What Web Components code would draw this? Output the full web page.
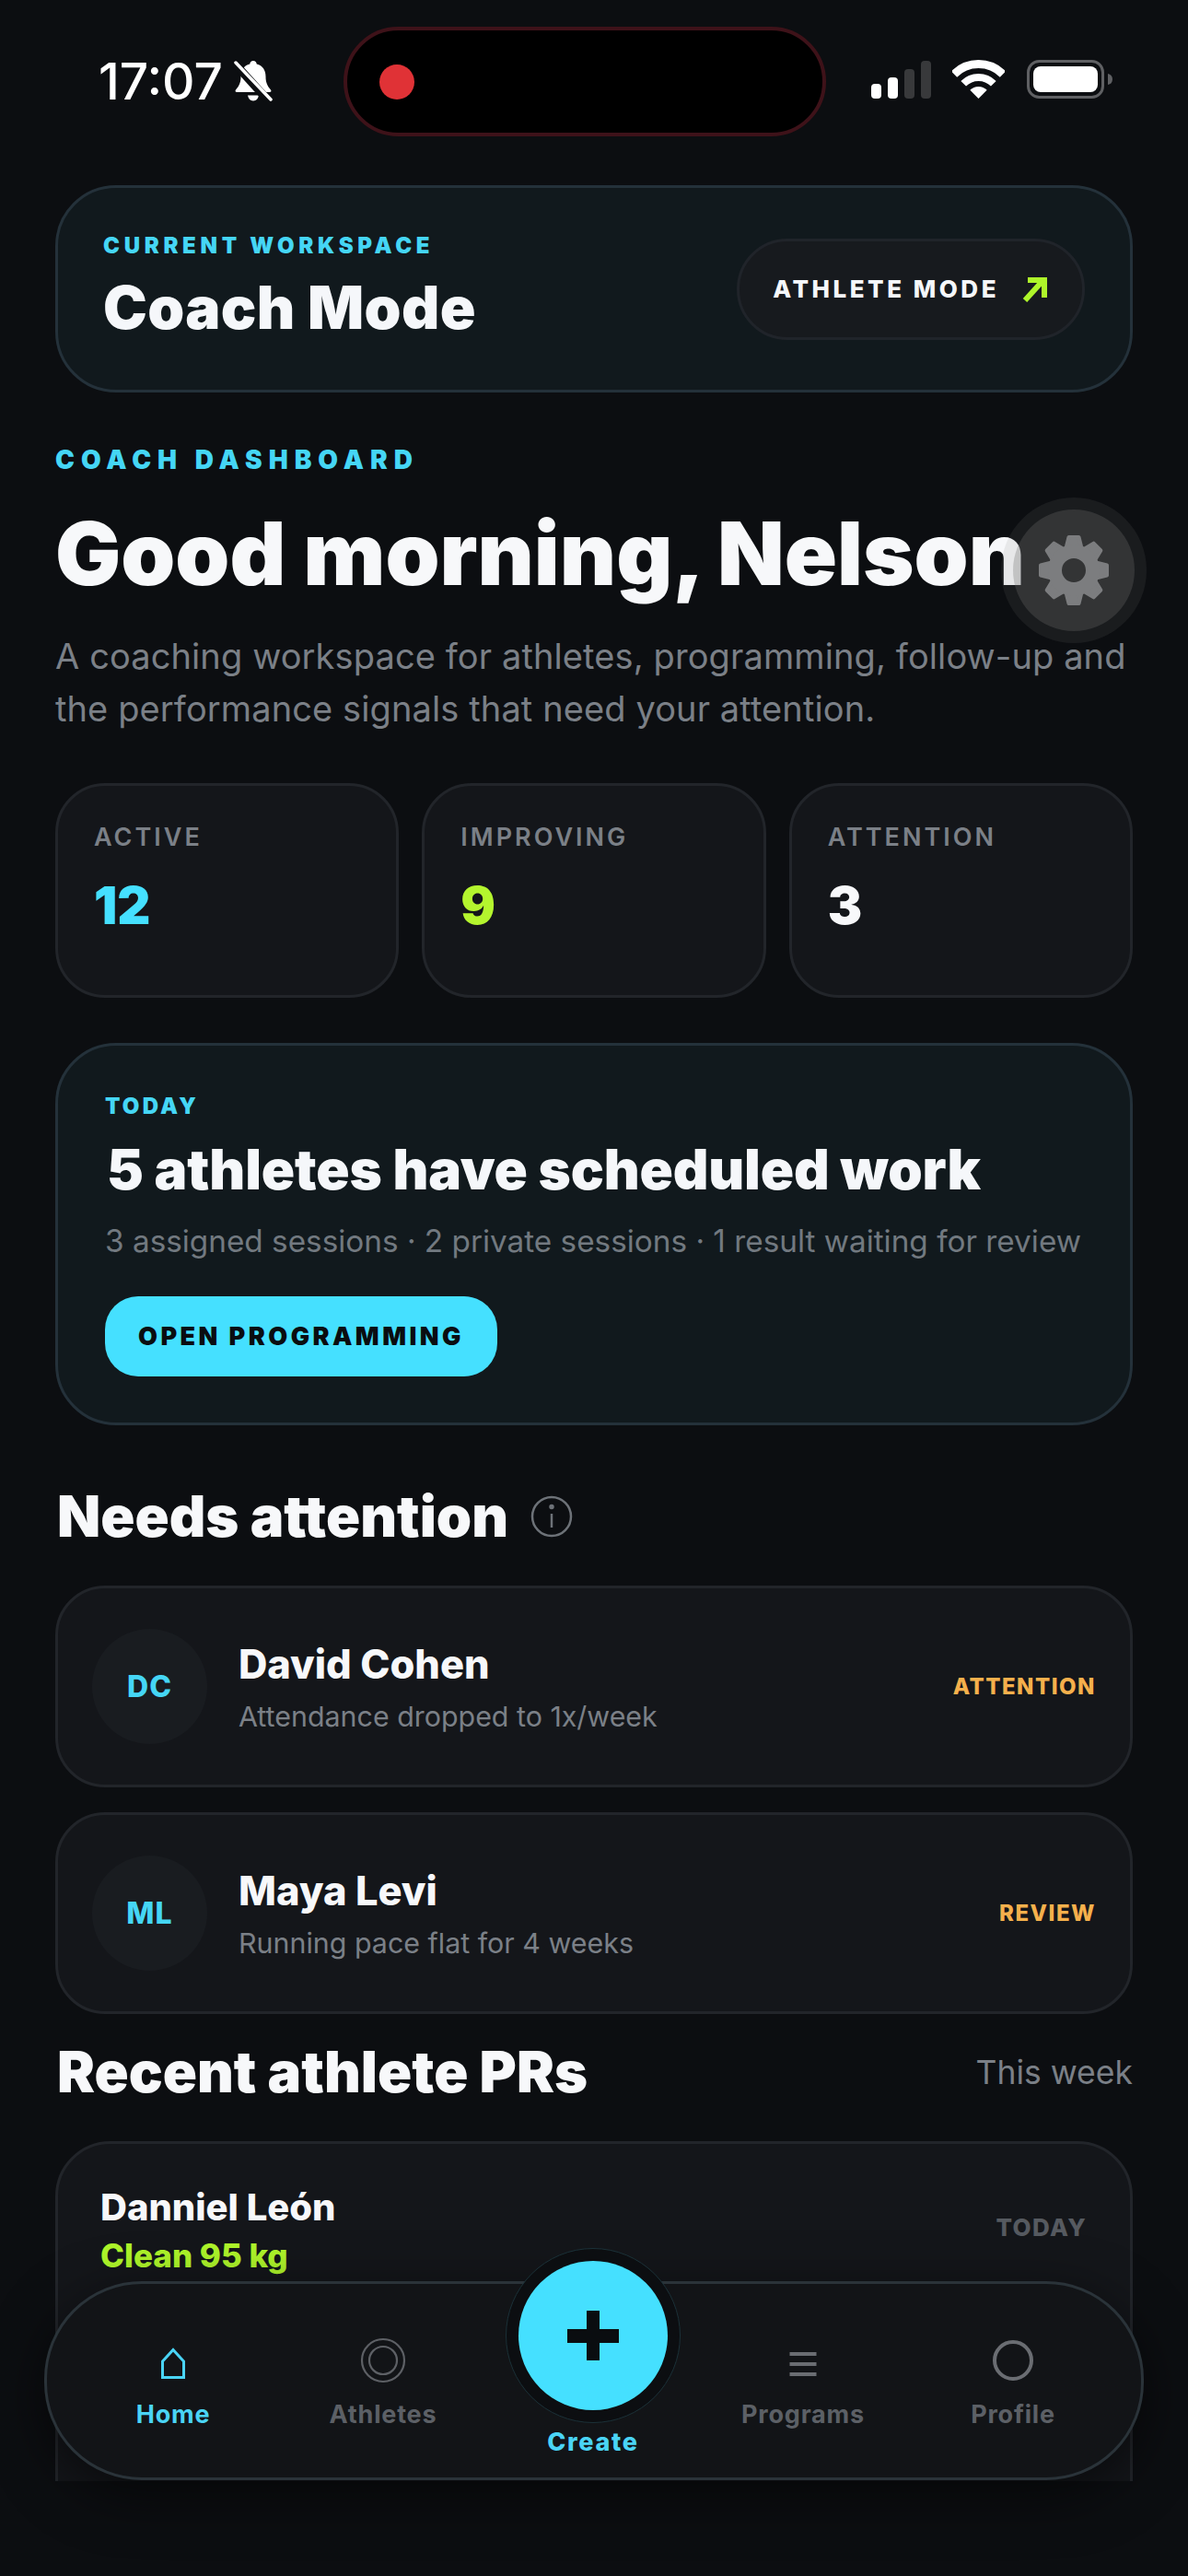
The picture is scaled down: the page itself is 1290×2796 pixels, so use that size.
<!DOCTYPE html>
<html lang="en">
<head>
<meta charset="utf-8">
<title>Coach dashboard</title>
<style>
  html, body { margin: 0; padding: 0; background: #0c0e11; }
  body { font-family: Inter, "Noto Sans", sans-serif; color: #f5f7fa; }
</style>
</head>
<body>

<app-shell>
  <status-bar></status-bar>
  <workspace-card label="CURRENT WORKSPACE" title="Coach Mode" action="ATHLETE MODE"></workspace-card>
  <hero-block label="COACH DASHBOARD" title="Good morning, Nelson">
    A coaching workspace for athletes, programming, follow-up and the performance signals that need your attention.
  </hero-block>
  <stat-row>
    <stat-card label="ACTIVE" value="12" tone="cyan"></stat-card>
    <stat-card label="IMPROVING" value="9" tone="lime"></stat-card>
    <stat-card label="ATTENTION" value="3"></stat-card>
  </stat-row>
  <today-card label="TODAY" title="5 athletes have scheduled work" action="OPEN PROGRAMMING">
    3 assigned sessions · 2 private sessions · 1 result waiting for review
  </today-card>
  <section-head title="Needs attention" info style="--top: 63px"></section-head>
  <athlete-row initials="DC" name="David Cohen" note="Attendance dropped to 1x/week" badge="ATTENTION"></athlete-row>
  <athlete-row initials="ML" name="Maya Levi" note="Running pace flat for 4 weeks" badge="REVIEW"></athlete-row>
  <section-head title="Recent athlete PRs" aside="This week" style="--top: 27px"></section-head>
  <pr-card name="Danniel León" lift="Clean 95 kg" when="TODAY"></pr-card>

  <settings-fab slot="overlay"></settings-fab>
  <tab-bar slot="overlay"></tab-bar>
</app-shell>

<script>
class AppShell extends HTMLElement {
    constructor() {
        super();
        this.attachShadow({ mode: "open" }).innerHTML = `
            <style>
                :host { display: block; position: relative; width: 1290px; height: 2796px; overflow: hidden; }
                .scroll { height: 2693px; padding: 0 60px; box-sizing: border-box; overflow: hidden; }
            </style>
            <div class="scroll"><slot></slot></div>
            <slot name="overlay"></slot>
        `;
    }
}

class StatusBar extends HTMLElement {
    constructor() {
        super();
        this.attachShadow({ mode: "open" }).innerHTML = `
            <style>
                :host { display: flex; align-items: flex-start; height: 201px; margin: 0 -60px; }
                .time { margin: 60px 0 0 107px; width: 137px; font-size: 55px; line-height: 56px; font-weight: 500; letter-spacing: 0; color: #fff; white-space: nowrap; }
                .bell { margin: 65px 0 0 8px; }
                .island { margin: 29px 0 0 77px; width: 524px; height: 119px; box-sizing: border-box; border: 4px solid #3e1219; border-radius: 60px; background: #000; display: flex; align-items: center; padding-left: 35px; }
                .dot { width: 38px; height: 38px; border-radius: 50%; background: #e03236; }
                .signal { margin: 65px 0 0 49px; display: flex; align-items: flex-end; gap: 7px; height: 42px; }
                .signal i { display: block; width: 11px; border-radius: 4px; background: #38393b; }
                .signal i.on { background: #fff; }
                .wifi { margin: 65px 0 0 23px; }
                .battery { margin: 65px 0 0 24px; }
            </style>
            <div class="time">17:07</div>
            <svg class="bell" width="44" height="46" viewBox="0 0 44 46">
                <path fill="#fff" d="M23 1c2.200 0 3.500 1.500 3.700 3.500 6.500 1.500 9.800 6.800 9.800 13.500 0 6 1.500 10 5.500 14.500 1 1.200.3 2.500-1.200 2.500H5.200c-1.500 0-2.200-1.300-1.200-2.500 4-4.500 5.500-8.500 5.500-14.500 0-6.700 3.300-12 9.800-13.500C19.500 2.500 20.800 1 23 1zM17 38.500h12c-.8 3.800-2.800 6-6 6s-5.200-2.200-6-6z"/>
                <path d="M2 3 L40 45" stroke="#0c0e11" stroke-width="9" fill="none"/>
                <path d="M4 3 L42 43" stroke="#fff" stroke-width="3.500" fill="none" stroke-linecap="round"/>
            </svg>
            <div class="island"><div class="dot"></div></div>
            <div class="signal">
                <i class="on" style="height:16px"></i><i class="on" style="height:23px"></i><i style="height:32px"></i><i style="height:41px"></i>
            </div>
            <svg class="wifi" width="57" height="42" viewBox="0 0 57 42" fill="none" stroke="#fff">
                <path stroke-width="9" d="M2 15.500A37.500 37.500 0 0 1 55 15.500"/>
                <path stroke-width="8" d="M12.200 25.700A23 23 0 0 1 44.800 25.700"/>
                <path stroke="none" fill="#fff" d="M28.500 42L19.300 32.800A13 13 0 0 1 37.700 32.800Z"/>
            </svg>
            <svg class="battery" width="94" height="42" viewBox="0 0 94 42">
                <rect x="1.500" y="1.500" width="81" height="39" rx="12" fill="none" stroke="#5f6063" stroke-width="3"/>
                <rect x="7" y="7" width="70" height="28" rx="8" fill="#fff"/>
                <path d="M88 15c3 .5 5 2.500 5 6s-2 5.500-5 6z" fill="#5f6063"/>
            </svg>
        `;
    }
}

class WorkspaceCard extends HTMLElement {
    constructor() {
        super();
        this.attachShadow({ mode: "open" }).innerHTML = `
            <style>
                :host { display: flex; align-items: center; justify-content: space-between; height: 225px; box-sizing: border-box; padding: 0 49px; background: #11191d; border: 3px solid #24313a; border-radius: 66px; }
                .text { padding-bottom: 5px; }
                .label { font-size: 24px; line-height: 30px; font-weight: 900; letter-spacing: 4.700px; color: #45d6f5; }
                .title { margin-top: 16px; font-size: 64px; line-height: 72px; font-weight: 900; letter-spacing: .4px; color: #f5f7fa; }
                .action { display: flex; align-items: center; gap: 24px; height: 110px; box-sizing: border-box; padding: 0 36px; background: #171a1e; border: 3px solid #20242a; border-radius: 55px; font-size: 26px; font-weight: 800; letter-spacing: 3.500px; color: #f5f7fa; }
            </style>
            <div class="text">
                <div class="label">${this.getAttribute("label")}</div>
                <div class="title">${this.getAttribute("title")}</div>
            </div>
            <div class="action">${this.getAttribute("action")}
                <svg width="30" height="28" viewBox="0 0 30 28" fill="none" stroke="#aef52a" stroke-width="6">
                    <path d="M4 26L23 5"/><path d="M7 4H25V23"/>
                </svg>
            </div>
        `;
        this.removeAttribute("title");
    }
}

class HeroBlock extends HTMLElement {
    constructor() {
        super();
        this.attachShadow({ mode: "open" }).innerHTML = `
            <style>
                :host { display: block; margin-top: 56px; }
                .label { font-size: 28px; line-height: 34px; font-weight: 900; letter-spacing: 7px; color: #45d6f5; }
                h1 { margin: 30px 0 0; font-size: 94.500px; line-height: 110px; font-weight: 900; letter-spacing: 0; color: #f7f8fa; white-space: nowrap; }
                p { margin: 28px 0 0; font-size: 38px; line-height: 57px; font-weight: 400; letter-spacing: .11px; color: #7b8087; }
            </style>
            <div class="label">${this.getAttribute("label")}</div>
            <h1>${this.getAttribute("title")}</h1>
            <p><slot></slot></p>
        `;
        this.removeAttribute("title");
    }
}

class StatRow extends HTMLElement {
    constructor() {
        super();
        this.attachShadow({ mode: "open" }).innerHTML = `
            <style>
                :host { display: grid; grid-template-columns: repeat(3, 1fr); gap: 25px; margin-top: 52px; }
            </style>
            <slot></slot>
        `;
    }
}

class StatCard extends HTMLElement {
    constructor() {
        super();
        const tones = { cyan: "#45e0ff", lime: "#b4f52e" };
        const color = tones[this.getAttribute("tone")] || "#f7f8fa";
        this.attachShadow({ mode: "open" }).innerHTML = `
            <style>
                :host { display: block; height: 233px; box-sizing: border-box; padding: 39px 39px 0; background: #14161a; border: 3px solid #22252a; border-radius: 54px; }
                .label { font-size: 27px; line-height: 34px; font-weight: 600; letter-spacing: 3px; color: #7b8087; }
                .value { margin-top: 25px; font-size: 56px; line-height: 64px; font-weight: 900; color: ${color}; }
            </style>
            <div class="label">${this.getAttribute("label")}</div>
            <div class="value">${this.getAttribute("value")}</div>
        `;
    }
}

class TodayCard extends HTMLElement {
    constructor() {
        super();
        this.attachShadow({ mode: "open" }).innerHTML = `
            <style>
                :host { display: block; height: 415px; box-sizing: border-box; margin-top: 49px; padding: 51px 51px 0; background: #11191d; border: 3px solid #24313a; border-radius: 66px; }
                .label { font-size: 24px; line-height: 30px; font-weight: 900; letter-spacing: 3.200px; color: #45d6f5; }
                h2 { margin: 17px 0 0 2px; font-size: 60px; line-height: 72px; font-weight: 900; letter-spacing: -.15px; color: #f5f7fa; white-space: nowrap; }
                p { margin: 20px 0 0; font-size: 33.300px; line-height: 44px; color: #727980; white-space: nowrap; }
                .action { display: inline-flex; align-items: center; height: 87px; margin-top: 38px; padding: 0 36px; border-radius: 36px; background: #45e0ff; color: #0a0d10; font-size: 27px; font-weight: 900; letter-spacing: 3.450px; }
            </style>
            <div class="label">${this.getAttribute("label")}</div>
            <h2>${this.getAttribute("title")}</h2>
            <p><slot></slot></p>
            <div class="action">${this.getAttribute("action")}</div>
        `;
        this.removeAttribute("title");
    }
}

class SectionHead extends HTMLElement {
    constructor() {
        super();
        const info = this.hasAttribute("info") ? `
            <svg width="46" height="46" viewBox="0 0 46 46" fill="none" stroke="#6d7278" stroke-width="2.500">
                <circle cx="23" cy="23" r="21"/><path d="M23 20V35"/><circle cx="23" cy="12.500" r="1.500" fill="#6d7278"/>
            </svg>` : "";
        const aside = this.getAttribute("aside");
        this.attachShadow({ mode: "open" }).innerHTML = `
            <style>
                :host { display: flex; align-items: center; gap: 24px; height: 72px; margin: var(--top, 0) 0 39px; }
                h2 { margin: 0 0 0 2px; font-size: 61.400px; line-height: 72px; font-weight: 900; letter-spacing: 0; color: #f7f8fa; white-space: nowrap; }
                .aside { margin-left: auto; font-size: 35.500px; color: #7b8087; }
            </style>
            <h2>${this.getAttribute("title")}</h2>${info}
            ${aside ? `<div class="aside">${aside}</div>` : ""}
        `;
        this.removeAttribute("title");
    }
}

class AthleteRow extends HTMLElement {
    constructor() {
        super();
        this.attachShadow({ mode: "open" }).innerHTML = `
            <style>
                :host { display: flex; align-items: center; gap: 34px; height: 219px; box-sizing: border-box; margin-bottom: 27px; padding: 0 37px 0 37px; background: #14161a; border: 3px solid #22252a; border-radius: 54px; }
                :host(:last-of-type) { margin-bottom: 0; }
                .avatar { width: 125px; height: 125px; border-radius: 50%; background: #191c20; display: flex; align-items: center; justify-content: center; font-size: 32px; font-weight: 800; color: #45d6f5; letter-spacing: 1px; }
                .name { font-size: 43.400px; line-height: 56px; font-weight: 800; color: #f7f8fa; }
                .note { margin-top: 9px; font-size: 30.400px; line-height: 40px; color: #7b8087; }
                .badge { margin-left: auto; font-size: 24px; font-weight: 800; letter-spacing: 1.500px; color: #f5b04c; }
            </style>
            <div class="avatar">${this.getAttribute("initials")}</div>
            <div>
                <div class="name">${this.getAttribute("name")}</div>
                <div class="note">${this.getAttribute("note")}</div>
            </div>
            <div class="badge">${this.getAttribute("badge")}</div>
        `;
    }
}

class PrCard extends HTMLElement {
    constructor() {
        super();
        this.attachShadow({ mode: "open" }).innerHTML = `
            <style>
                :host { display: flex; align-items: flex-start; justify-content: space-between; min-height: 500px; box-sizing: border-box; padding: 44px 47px 0 46px; background: #14161a; border: 3px solid #22252a; border-radius: 60px; }
                .name { font-size: 40px; line-height: 50px; font-weight: 800; color: #f7f8fa; }
                .lift { margin-top: 2px; font-size: 35px; line-height: 50px; font-weight: 800; color: #aef52a; }
                .when { margin-top: 30px; font-size: 26px; line-height: 34px; font-weight: 800; letter-spacing: 1.300px; color: #565a60; }
            </style>
            <div>
                <div class="name">${this.getAttribute("name")}</div>
                <div class="lift">${this.getAttribute("lift")}</div>
            </div>
            <div class="when">${this.getAttribute("when")}</div>
        `;
    }
}

class SettingsFab extends HTMLElement {
    constructor() {
        super();
        let teeth = "";
        for (let i = 0; i < 8; i++) {
            teeth += `<path transform="rotate(${i * 45})" d="M-8 -26L-5.500 -36H5.500L8 -26Z" stroke="#7c7d7f" stroke-width="4" stroke-linejoin="round"/>`;
        }
        this.attachShadow({ mode: "open" }).innerHTML = `
            <style>
                :host { position: absolute; left: 1087px; top: 540px; width: 158px; height: 158px; border-radius: 50%; background: rgba(127,127,127,.13); display: flex; align-items: center; justify-content: center; }
                .disc { width: 132px; height: 132px; border-radius: 50%; background: rgba(108,108,108,.3); display: flex; align-items: center; justify-content: center; }
            </style>
            <div class="disc">
                <svg width="80" height="80" viewBox="-40 -40 80 80" fill="#7c7d7f">
                    ${teeth}
                    <path fill-rule="evenodd" d="M-28 0a28 28 0 1 0 56 0a28 28 0 1 0 -56 0zM-13 0a13 13 0 1 1 26 0a13 13 0 1 1 -26 0z"/>
                </svg>
            </div>
        `;
    }
}

class TabItem extends HTMLElement {
    constructor() {
        super();
        this.attachShadow({ mode: "open" }).innerHTML = `
            <style>
                :host { display: flex; flex-direction: column; align-items: center; gap: 15px; font-size: 27px; line-height: 30px; font-weight: 700; letter-spacing: .8px; color: #5c6066; }
                :host([active]) { color: #4ad4f5; }
                .icon { display: block; height: 60px; }
            </style>
            <div class="icon"><slot name="icon"></slot></div>
            <div>${this.getAttribute("label")}</div>
        `;
    }
}

class CreateButton extends HTMLElement {
    constructor() {
        super();
        this.attachShadow({ mode: "open" }).innerHTML = `
            <style>
                :host { display: flex; flex-direction: column; align-items: center; gap: 6px; margin-top: -91px; font-size: 27px; line-height: 30px; font-weight: 800; letter-spacing: 1.700px; color: #4ad4f5; }
                .ring { width: 190px; height: 190px; box-sizing: border-box; border: 1px solid #1b3138; border-radius: 50%; background: #0c0e11; display: flex; align-items: center; justify-content: center; }
                .btn { width: 162px; height: 162px; border-radius: 50%; background: #45e0ff; display: flex; align-items: center; justify-content: center; }
            </style>
            <div class="ring">
                <div class="btn">
                    <svg width="56" height="54" viewBox="0 0 56 54" fill="#0a0d10"><rect x="21" y="0" width="14" height="54"/><rect x="0" y="20" width="56" height="15"/></svg>
                </div>
            </div>
            <div>Create</div>
        `;
    }
}

class TabBar extends HTMLElement {
    constructor() {
        super();
        this.attachShadow({ mode: "open" }).innerHTML = `
            <style>
                :host { position: absolute; left: 48px; top: 2476px; width: 1194px; height: 216px; box-sizing: border-box; padding: 52px 25px 0 23px; display: grid; grid-template-columns: repeat(5, 1fr); align-items: start; background: #121417; border: 3px solid #2a3339; border-radius: 106px; box-shadow: 0 16px 60px rgba(0,0,0,.55); }
            </style>
            <tab-item label="Home" active>
                <svg slot="icon" width="60" height="60" viewBox="0 0 60 60" fill="none" stroke="#4ad4f5" stroke-width="3"><path d="M18.500 32L30 19.500L41.500 32V49.500H18.500Z"/></svg>
            </tab-item>
            <tab-item label="Athletes">
                <svg slot="icon" width="60" height="60" viewBox="0 0 60 60" fill="none" stroke="#5d6065" stroke-width="2.200"><circle cx="30" cy="31" r="23"/><circle cx="30" cy="31" r="15"/></svg>
            </tab-item>
            <create-button></create-button>
            <tab-item label="Programs">
                <svg slot="icon" width="60" height="60" viewBox="0 0 60 60" fill="#6a6d72"><rect x="15.500" y="22" width="29" height="4"/><rect x="15.500" y="33" width="29" height="4"/><rect x="15.500" y="44" width="29" height="4"/></svg>
            </tab-item>
            <tab-item label="Profile">
                <svg slot="icon" width="60" height="60" viewBox="0 0 60 60" fill="none" stroke="#6a6d72" stroke-width="4"><circle cx="30" cy="31" r="20"/></svg>
            </tab-item>
        `;
    }
}

customElements.define("app-shell", AppShell);
customElements.define("status-bar", StatusBar);
customElements.define("workspace-card", WorkspaceCard);
customElements.define("hero-block", HeroBlock);
customElements.define("stat-row", StatRow);
customElements.define("stat-card", StatCard);
customElements.define("today-card", TodayCard);
customElements.define("section-head", SectionHead);
customElements.define("athlete-row", AthleteRow);
customElements.define("pr-card", PrCard);
customElements.define("settings-fab", SettingsFab);
customElements.define("tab-item", TabItem);
customElements.define("create-button", CreateButton);
customElements.define("tab-bar", TabBar);
</script>
</body>
</html>
